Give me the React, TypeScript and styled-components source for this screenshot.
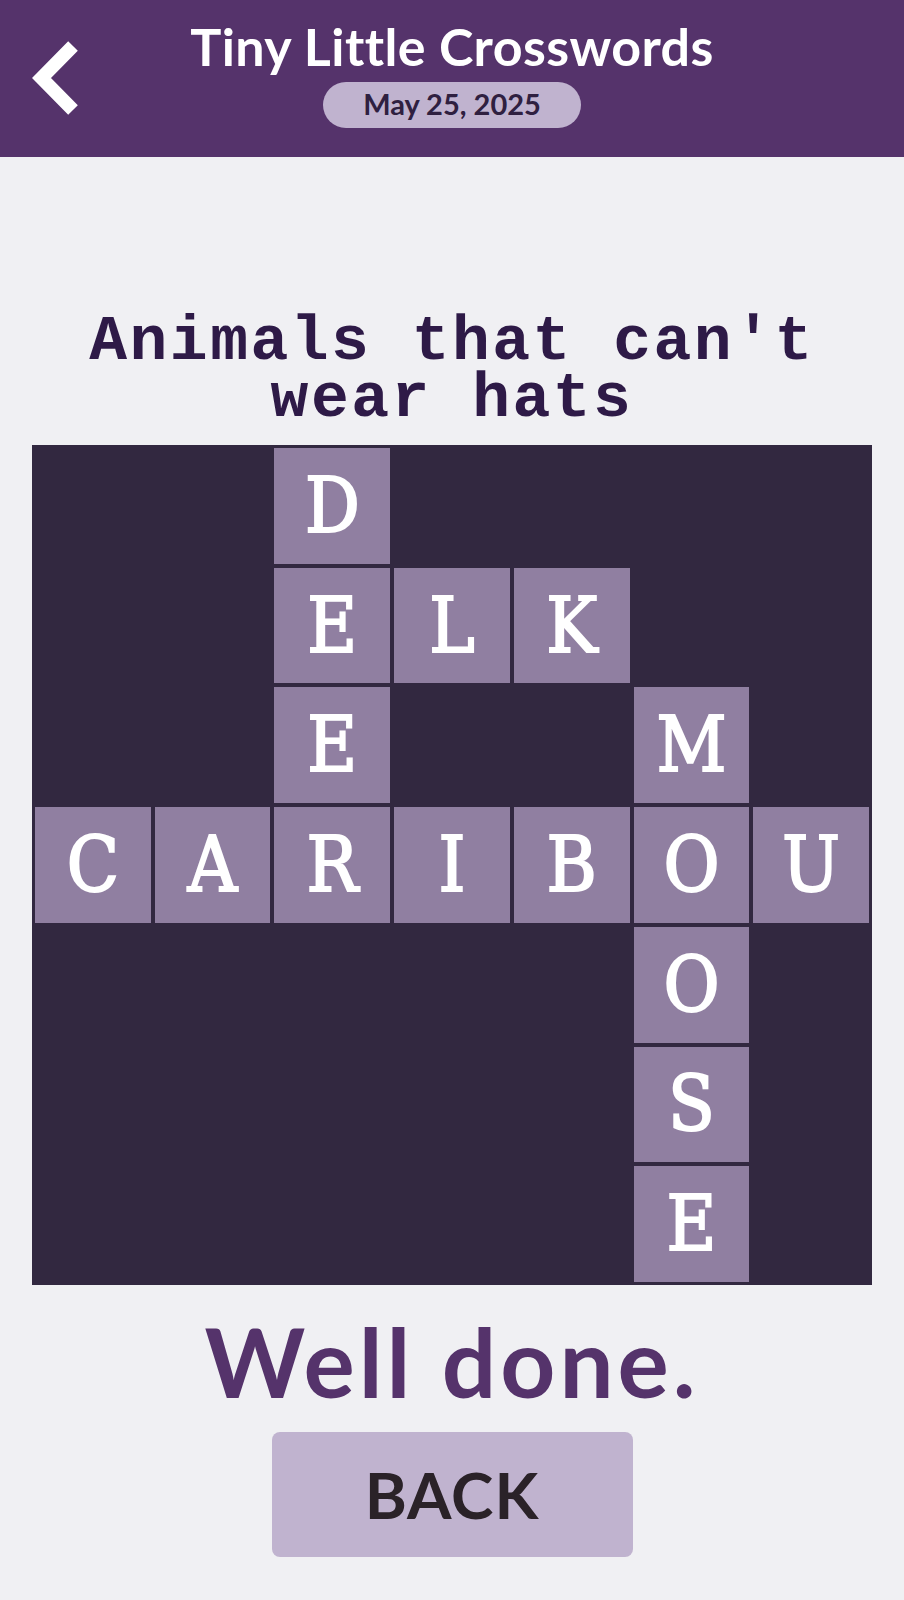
import styled, { createGlobalStyle } from 'styled-components';

const GlobalStyle = createGlobalStyle`
  html, body {
    margin: 0;
    padding: 0;
    background: #f0f0f3;
  }
  * {
    box-sizing: border-box;
  }
`;

type Cell = { row: number; col: number; letter: string };

// solved board, row/col are 1-based grid lines
const cells: Cell[] = [
  { row: 1, col: 3, letter: 'D' },
  { row: 2, col: 3, letter: 'E' },
  { row: 2, col: 4, letter: 'L' },
  { row: 2, col: 5, letter: 'K' },
  { row: 3, col: 3, letter: 'E' },
  { row: 3, col: 6, letter: 'M' },
  ...'CARIBOU'.split('').map((letter, i) => ({ row: 4, col: i + 1, letter })),
  { row: 5, col: 6, letter: 'O' },
  { row: 6, col: 6, letter: 'S' },
  { row: 7, col: 6, letter: 'E' },
];

const App = () => {
  return (
    <>
      <GlobalStyle />
      <Page>
        <Header>
          <BackIcon aria-label="back">
            <svg width="64" height="94" viewBox="0 0 64 94">
              <polyline
                points="49,14 17.5,46 49,78"
                fill="none"
                stroke="#ffffff"
                strokeWidth="13.5"
                strokeLinecap="butt"
                strokeLinejoin="miter"
              />
            </svg>
          </BackIcon>
          <HeaderCenter>
            <AppTitle>Tiny Little Crosswords</AppTitle>
            <DatePill>May 25, 2025</DatePill>
          </HeaderCenter>
        </Header>

        <Main>
          <PuzzleTitle>
            <TitleLine>Animals that can't</TitleLine>
            <TitleLine>wear hats</TitleLine>
          </PuzzleTitle>

          <Board>
            {cells.map((c, i) => (
              <LetterCell key={i} $row={c.row} $col={c.col}>
                {c.letter}
              </LetterCell>
            ))}
          </Board>

          <Done>Well done.</Done>
          <BackButton>BACK</BackButton>
        </Main>
      </Page>
    </>
  );
};

export default App;

const Page = styled.div`
  width: 904px;
  min-height: 1600px;
  background: #f0f0f3;
`;

const Header = styled.header`
  height: 157px;
  background: #55336b;
  display: grid;
  grid-template-columns: 1fr auto 1fr;
  padding-top: 16px;
`;

const BackIcon = styled.button`
  grid-column: 1;
  justify-self: start;
  align-self: start;
  margin: 16px 0 0 24px;
  padding: 0;
  border: none;
  background: none;
  width: 64px;
  height: 94px;
  svg {
    display: block;
  }
`;

const HeaderCenter = styled.div`
  grid-column: 2;
  display: flex;
  flex-direction: column;
  align-items: center;
`;

const AppTitle = styled.h1`
  margin: 0;
  font-family: Lato, 'Noto Sans', sans-serif;
  font-weight: 700;
  font-size: 52px;
  letter-spacing: 0.4px;
  line-height: 60px;
  color: #ffffff;
  white-space: nowrap;
`;

const DatePill = styled.div`
  margin-top: 6px;
  width: 258px;
  height: 46px;
  border-radius: 23px;
  background: #c0b3cf;
  color: #2f2040;
  font-family: Lato, 'Noto Sans', sans-serif;
  font-weight: 700;
  font-size: 29px;
  display: flex;
  align-items: center;
  justify-content: center;
  padding-bottom: 4px;
`;

const Main = styled.main`
  display: flex;
  flex-direction: column;
  align-items: center;
  padding-top: 157px;
`;

const PuzzleTitle = styled.h2`
  margin: 0;
  display: flex;
  flex-direction: column;
  align-items: center;
  font-family: 'Liberation Mono', 'Courier New', monospace;
  font-weight: 700;
  font-size: 63px;
  letter-spacing: 2.5px;
  color: #2e1a47;
`;

const TitleLine = styled.span`
  display: block;
  height: 57px;
  line-height: 57px;
  white-space: nowrap;
`;

const Board = styled.div`
  margin-top: 17px;
  width: 840px;
  height: 840px;
  padding: 3px;
  background: #322840;
  display: grid;
  grid-template-columns: repeat(7, 1fr);
  grid-template-rows: repeat(7, 1fr);
  gap: 4px;
`;

const LetterCell = styled.div<{ $row: number; $col: number }>`
  grid-row: ${(p) => p.$row};
  grid-column: ${(p) => p.$col};
  background: #907fa1;
  color: #ffffff;
  display: flex;
  align-items: center;
  justify-content: center;
  font-family: 'DejaVu Serif', 'Liberation Serif', serif;
  font-stretch: condensed;
  font-size: 76px;
  line-height: 1;
  -webkit-text-stroke: 2px #ffffff;
`;

const Done = styled.div`
  margin-top: 20px;
  font-family: Lato, 'Noto Sans', sans-serif;
  font-weight: 700;
  font-size: 96px;
  letter-spacing: 4px;
  line-height: 112px;
  color: #55336b;
`;

const BackButton = styled.button`
  margin-top: 15px;
  width: 361px;
  height: 125px;
  border: none;
  border-radius: 8px;
  background: #c0b3cf;
  color: #2a2228;
  font-family: Lato, 'Noto Sans', sans-serif;
  font-weight: 700;
  font-size: 64px;
  letter-spacing: 1px;
  display: flex;
  align-items: center;
  justify-content: center;
`;
